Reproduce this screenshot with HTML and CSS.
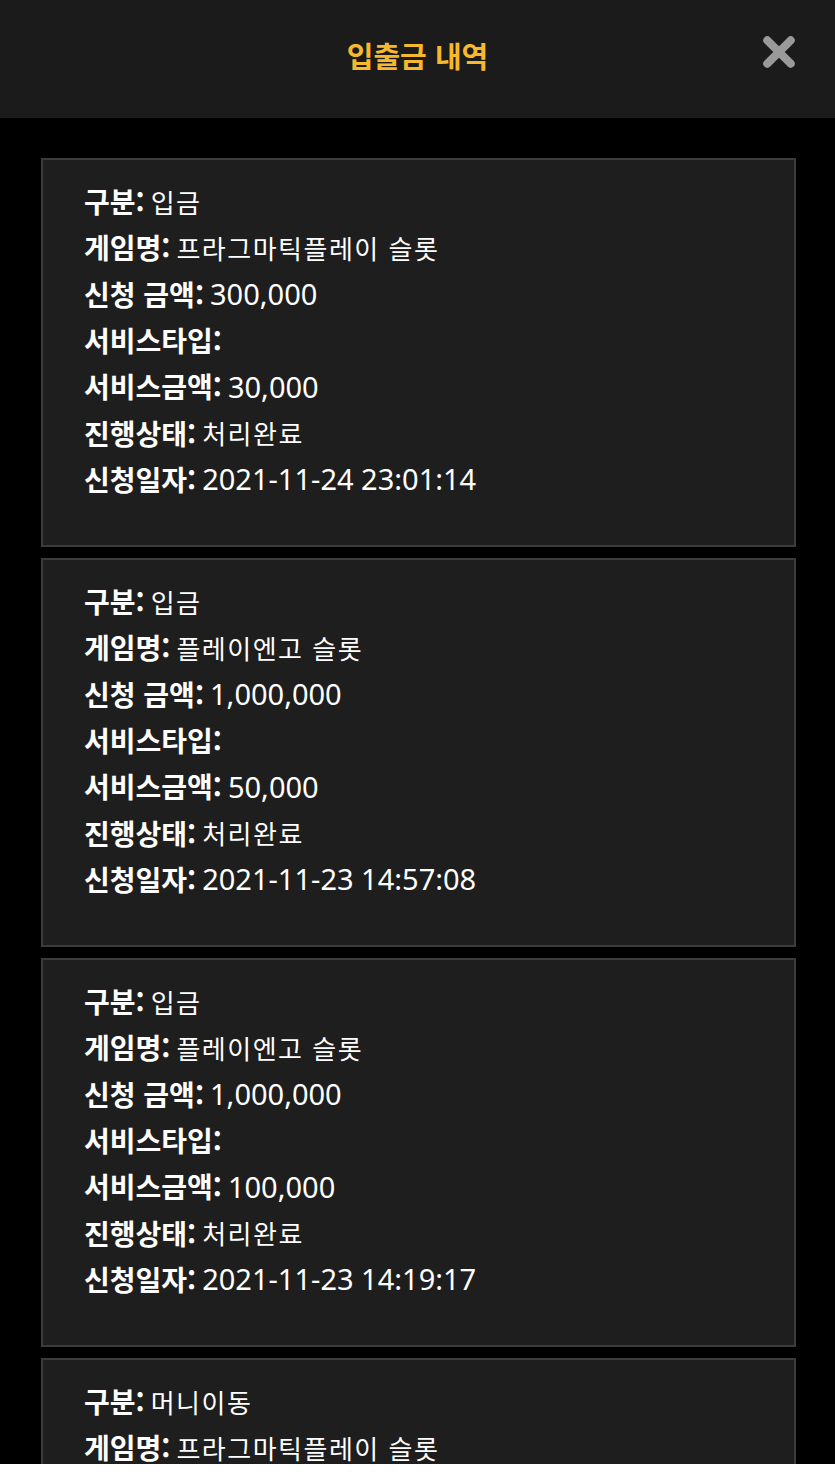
FILE: index.html
```html
<!DOCTYPE html>
<html lang="ko">
<head>
    <meta charset="UTF-8">
    <meta name="viewport" content="width=device-width, initial-scale=1.0">
    <title>입출금 내역</title>
    <link rel="stylesheet" href="styles.css">
</head>
<body>
    <div class="screen">
        <header class="top-bar">
            <h1>입출금 내역</h1>
            <button class="close-btn" aria-label="닫기">
                <svg viewBox="0 0 40 40" width="36" height="36">
                    <path d="M7 7 L33 33 M33 7 L7 33" stroke="#9a9a9a" stroke-width="9" stroke-linecap="round" fill="none"/>
                </svg>
            </button>
        </header>

        <main class="history-list">
            <div class="history-card">
                <p class="row"><b>구분:</b><span>입금</span></p>
                <p class="row"><b>게임명:</b><span>프라그마틱플레이 슬롯</span></p>
                <p class="row"><b>신청 금액:</b><span class="num">300,000</span></p>
                <p class="row"><b>서비스타입:</b></p>
                <p class="row"><b>서비스금액:</b><span class="num">30,000</span></p>
                <p class="row"><b>진행상태:</b><span>처리완료</span></p>
                <p class="row"><b>신청일자:</b><span class="num">2021-11-24 23:01:14</span></p>
            </div>

            <div class="history-card">
                <p class="row"><b>구분:</b><span>입금</span></p>
                <p class="row"><b>게임명:</b><span>플레이엔고 슬롯</span></p>
                <p class="row"><b>신청 금액:</b><span class="num">1,000,000</span></p>
                <p class="row"><b>서비스타입:</b></p>
                <p class="row"><b>서비스금액:</b><span class="num">50,000</span></p>
                <p class="row"><b>진행상태:</b><span>처리완료</span></p>
                <p class="row"><b>신청일자:</b><span class="num">2021-11-23 14:57:08</span></p>
            </div>

            <div class="history-card">
                <p class="row"><b>구분:</b><span>입금</span></p>
                <p class="row"><b>게임명:</b><span>플레이엔고 슬롯</span></p>
                <p class="row"><b>신청 금액:</b><span class="num">1,000,000</span></p>
                <p class="row"><b>서비스타입:</b></p>
                <p class="row"><b>서비스금액:</b><span class="num">100,000</span></p>
                <p class="row"><b>진행상태:</b><span>처리완료</span></p>
                <p class="row"><b>신청일자:</b><span class="num">2021-11-23 14:19:17</span></p>
            </div>

            <div class="history-card">
                <p class="row"><b>구분:</b><span>머니이동</span></p>
                <p class="row"><b>게임명:</b><span>프라그마틱플레이 슬롯</span></p>
                <p class="row"><b>신청 금액:</b><span class="num">300,000</span></p>
                <p class="row"><b>서비스타입:</b></p>
            </div>
        </main>
    </div>
</body>
</html>
```

FILE: styles.css
```css
* {
    margin: 0;
    padding: 0;
    box-sizing: border-box;
    font-family: "Noto Sans CJK KR", "Noto Sans", sans-serif;
}

body {
    background: #ffffff;
}

.screen {
    height: 1464px;
    overflow: hidden;
    background: #000000;
}

.top-bar {
    position: relative;
    height: 118px;
    background: #1b1b1b;
    display: flex;
    justify-content: center;
    align-items: center;
}

.top-bar h1 {
    color: #f7b92b;
    font-size: 29px;
    font-weight: 700;
    margin-top: -8px;
}

.close-btn {
    position: absolute;
    top: 34px;
    right: 38px;
    background: none;
    border: none;
    cursor: pointer;
    display: flex;
}

.history-list {
    display: flex;
    flex-direction: column;
    gap: 11px;
    padding: 40px 39px 0 41px;
}

.history-card {
    flex: none;
    height: 389px;
    background: #1e1e1e;
    border: 2px solid #3c3c3c;
    padding: 18px 40px 0 41px;
    overflow: hidden;
}

.row {
    height: 46.3px;
    display: flex;
    align-items: center;
    gap: 6px;
    color: #ffffff;
    font-size: 26px;
    letter-spacing: 1.5px;
    white-space: nowrap;
}

.row b {
    font-size: 28px;
    font-weight: 700;
    letter-spacing: 0;
}

.num {
    font-family: "Noto Sans", sans-serif;
    font-size: 29px;
    letter-spacing: 0;
}
```
